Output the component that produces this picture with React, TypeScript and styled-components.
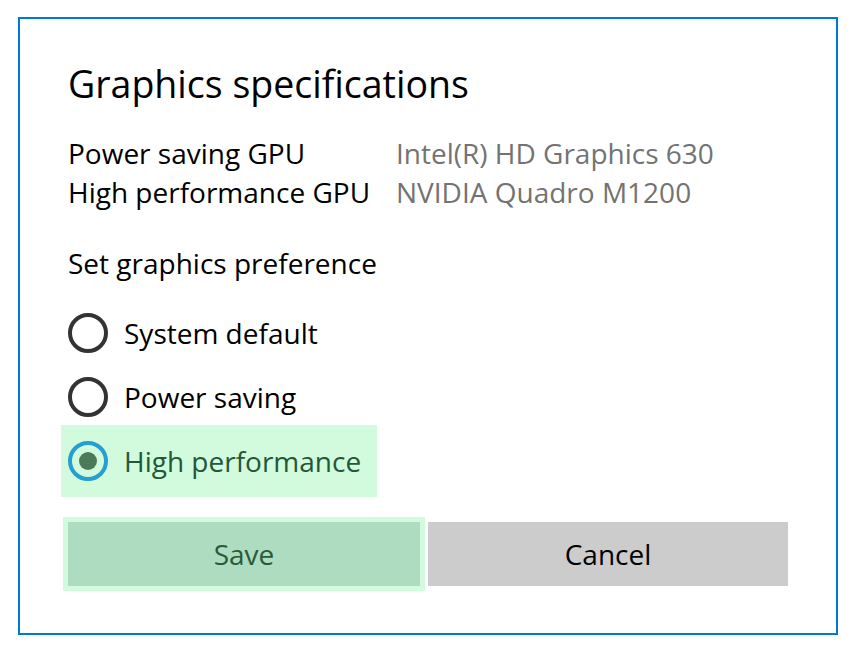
import React, { useState } from 'react';
import styled, { createGlobalStyle } from 'styled-components';

const GlobalStyle = createGlobalStyle`
  html, body {
    margin: 0;
    padding: 0;
    background: #ffffff;
  }
  body {
    font-family: 'Open Sans', 'Noto Sans', 'Liberation Sans', sans-serif;
    color: #000000;
  }
`;

const Dialog = styled.div`
  box-sizing: border-box;
  width: 820px;
  height: 618px;
  margin: 17px 18px 0 18px;
  border: 2px solid #0078d7;
  padding: 39px 48px 48px 48px;
  display: flex;
  flex-direction: column;
`;

const Title = styled.h1`
  margin: 0;
  font-size: 37.5px;
  line-height: 52px;
  font-weight: 400;
`;

const SpecGrid = styled.div`
  margin-top: 24px;
  display: grid;
  grid-template-columns: 328px 1fr;
  font-size: 28px;
  line-height: 39px;
`;

const SpecLabel = styled.div`
  white-space: nowrap;
`;

const SpecValue = styled.div`
  color: #737373;
  white-space: nowrap;
`;

const SectionLabel = styled.div`
  margin-top: 31px;
  font-size: 28px;
  line-height: 40px;
`;

const RadioGroup = styled.div`
  margin-top: 18px;
  display: flex;
  flex-direction: column;
  align-items: flex-start;
`;

const RadioItem = styled.label<{ $focused: boolean }>`
  display: flex;
  align-items: center;
  gap: 16px;
  height: 64px;
  margin-left: -7px;
  padding: 0 16px 0 7px;
  font-size: 28px;
  cursor: pointer;
  color: ${(p) => (p.$focused ? '#24573a' : '#000000')};
  background: ${(p) => (p.$focused ? '#d1fbdc' : 'transparent')};
  box-shadow: ${(p) =>
    p.$focused ? '0 4px 0 #d1fbdc, 0 -4px 0 #d1fbdc' : 'none'};
`;

const RadioCircle = styled.span<{ $checked: boolean }>`
  box-sizing: border-box;
  width: 40px;
  height: 40px;
  border-radius: 50%;
  border: 4px solid ${(p) => (p.$checked ? '#259fd2' : '#333333')};
  display: flex;
  align-items: center;
  justify-content: center;
  flex-shrink: 0;
  &::after {
    content: '';
    width: 18px;
    height: 18px;
    border-radius: 50%;
    background: #4b7a5a;
    display: ${(p) => (p.$checked ? 'block' : 'none')};
  }
`;

const ButtonRow = styled.div`
  margin-top: 29px;
  display: flex;
  gap: 8px;
`;

const Button = styled.button<{ $primary?: boolean }>`
  box-sizing: border-box;
  height: 64px;
  border: none;
  font-family: inherit;
  font-size: 28px;
  cursor: pointer;
  ${(p) =>
    p.$primary
      ? `
    width: 352px;
    background: #addcc0;
    color: #2a5a3a;
    box-shadow: 0 0 0 5px #d1fbdc;
  `
      : `
    flex: 1;
    background: #cccccc;
    color: #000000;
  `}
`;

const options = ['System default', 'Power saving', 'High performance'];

const App = () => {
  const [choice, setChoice] = useState(2);
  return (
    <>
      <GlobalStyle />
      <Dialog>
        <Title>Graphics specifications</Title>
        <SpecGrid>
          <SpecLabel>Power saving GPU</SpecLabel>
          <SpecValue>Intel(R) HD Graphics 630</SpecValue>
          <SpecLabel>High performance GPU</SpecLabel>
          <SpecValue>NVIDIA Quadro M1200</SpecValue>
        </SpecGrid>
        <SectionLabel>Set graphics preference</SectionLabel>
        <RadioGroup>
          {options.map((label, i) => (
            <RadioItem
              key={label}
              $focused={i === choice}
              onClick={() => setChoice(i)}>
              <RadioCircle $checked={i === choice} />
              {label}
            </RadioItem>
          ))}
        </RadioGroup>
        <ButtonRow>
          <Button $primary>Save</Button>
          <Button>Cancel</Button>
        </ButtonRow>
      </Dialog>
    </>
  );
};

export default App;
